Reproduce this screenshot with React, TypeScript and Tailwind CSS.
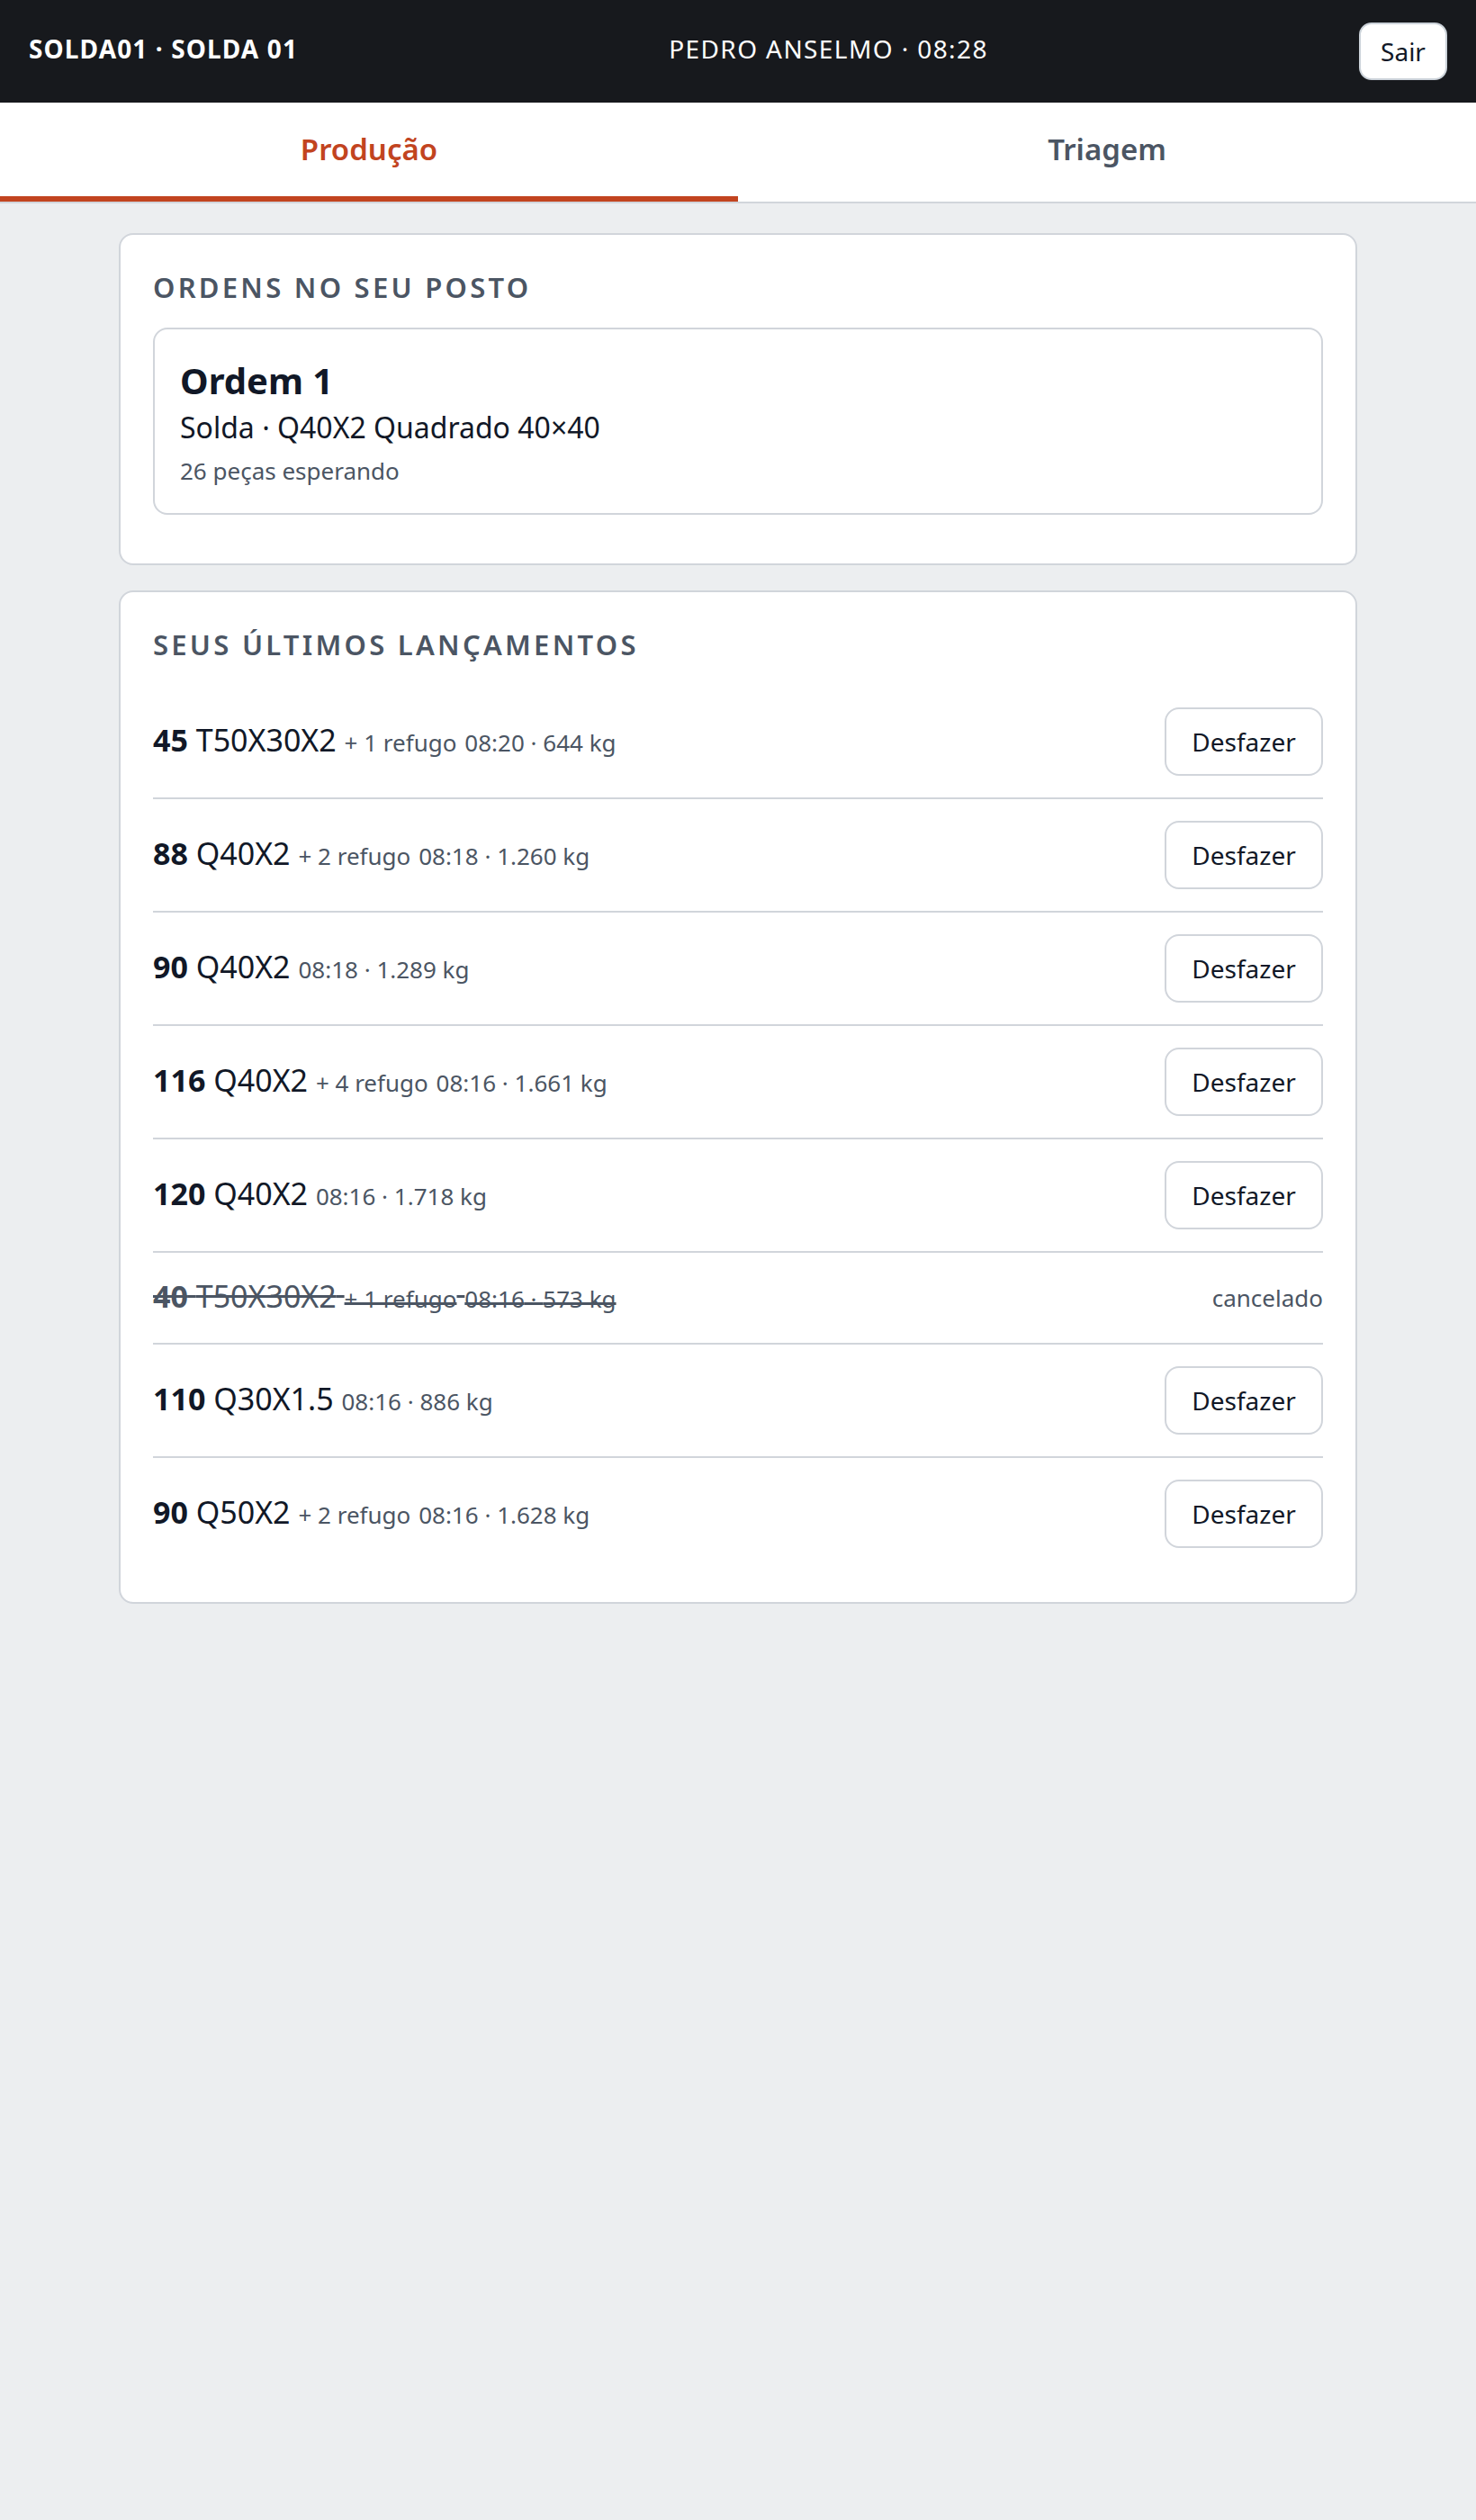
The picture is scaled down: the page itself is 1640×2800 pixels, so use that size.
import React from "react";

type Entry = {
  qty: string;
  code: string;
  scrap?: string;
  time: string;
  weight: string;
  cancelled?: boolean;
};

const entries: Entry[] = [
  { qty: "45", code: "T50X30X2", scrap: "+ 1 refugo", time: "08:20", weight: "644 kg" },
  { qty: "88", code: "Q40X2", scrap: "+ 2 refugo", time: "08:18", weight: "1.260 kg" },
  { qty: "90", code: "Q40X2", time: "08:18", weight: "1.289 kg" },
  { qty: "116", code: "Q40X2", scrap: "+ 4 refugo", time: "08:16", weight: "1.661 kg" },
  { qty: "120", code: "Q40X2", time: "08:16", weight: "1.718 kg" },
  { qty: "40", code: "T50X30X2", scrap: "+ 1 refugo", time: "08:16", weight: "573 kg", cancelled: true },
  { qty: "110", code: "Q30X1.5", time: "08:16", weight: "886 kg" },
  { qty: "90", code: "Q50X2", scrap: "+ 2 refugo", time: "08:16", weight: "1.628 kg" },
];

function EntryRow({ e, last }: { e: Entry; last: boolean }) {
  return (
    <div
      className={`flex items-center justify-between py-[24px] ${
        last ? "" : "border-b-2 border-[#d1d5db]"
      }`}
    >
      <div
        className={`text-[34px] leading-[49px] ${
          e.cancelled ? "text-[#4b5563] line-through" : "text-[#111827]"
        }`}
      >
        <span className="font-bold">{e.qty}</span> {e.code}{" "}
        {e.scrap && (
          <>
            <span className="text-[26px] text-[#4b5563]">{e.scrap}</span>{" "}
          </>
        )}
        <span className="text-[26px] text-[#4b5563]">
          {e.time} · {e.weight}
        </span>
      </div>
      {e.cancelled ? (
        <span className="text-[26px] leading-[49px] text-[#4b5563]">cancelado</span>
      ) : (
        <button className="h-[76px] w-[176px] rounded-[16px] border-2 border-[#d1d5db] bg-white text-[28px] text-[#111827]">
          Desfazer
        </button>
      )}
    </div>
  );
}

export default function App() {
  return (
    <div
      className="min-h-screen bg-[#eceef0]"
      style={{ fontFamily: '"Noto Sans", "Open Sans", sans-serif' }}
    >
      <header className="flex h-[114px] items-center justify-between bg-[#17191d] px-[32px] text-white">
        <div className="mb-[7px] text-[28px] font-bold tracking-[0.04em]">SOLDA01 · SOLDA 01</div>
        <div className="mb-[7px] text-[28px] tracking-[0.05em]">PEDRO ANSELMO · 08:28</div>
        <button className="h-[64px] w-[98px] rounded-[14px] border-2 border-[#cbd2d9] bg-white text-[28px] text-[#111827]">
          Sair
        </button>
      </header>

      <nav className="flex h-[112px] border-b-2 border-[#d1d5db] bg-white">
        <div className="flex flex-1 items-center justify-center border-b-[6px] border-[#c2441f] text-[33px] font-semibold text-[#c2441f]">
          Produção
        </div>
        <div className="flex flex-1 items-center justify-center border-b-[6px] border-transparent text-[33px] font-semibold text-[#4b5563]">
          Triagem
        </div>
      </nav>

      <main className="mx-auto flex max-w-[1376px] flex-col gap-[28px] pt-[33px]">
        <section className="rounded-[16px] border-2 border-[#d1d5db] bg-white px-[36px] pt-[38px] pb-[54px]">
          <h2 className="mb-[25px] text-[31px] font-semibold uppercase leading-[40px] tracking-[0.105em] text-[#4b5563]">
            Ordens no seu posto
          </h2>
          <div className="rounded-[16px] border-2 border-[#d1d5db] px-[28px] pt-[31px] pb-[29px]">
            <div className="text-[40px] font-bold leading-[52px] text-[#111827]">Ordem 1</div>
            <div className="mt-[4px] text-[32px] leading-[44px] text-[#111827]">
              Solda · Q40X2 Quadrado 40×40
            </div>
            <div className="mt-[8px] text-[26px] leading-[36px] text-[#4b5563]">
              26 peças esperando
            </div>
          </div>
        </section>

        <section className="rounded-[16px] border-2 border-[#d1d5db] bg-white px-[36px] pt-[38px] pb-[36px]">
          <h2 className="mb-[26px] text-[31px] font-semibold uppercase leading-[40px] tracking-[0.105em] text-[#4b5563]">
            Seus últimos lançamentos
          </h2>
          <div>
            {entries.map((e, i) => (
              <EntryRow key={i} e={e} last={i === entries.length - 1} />
            ))}
          </div>
        </section>
      </main>
    </div>
  );
}
